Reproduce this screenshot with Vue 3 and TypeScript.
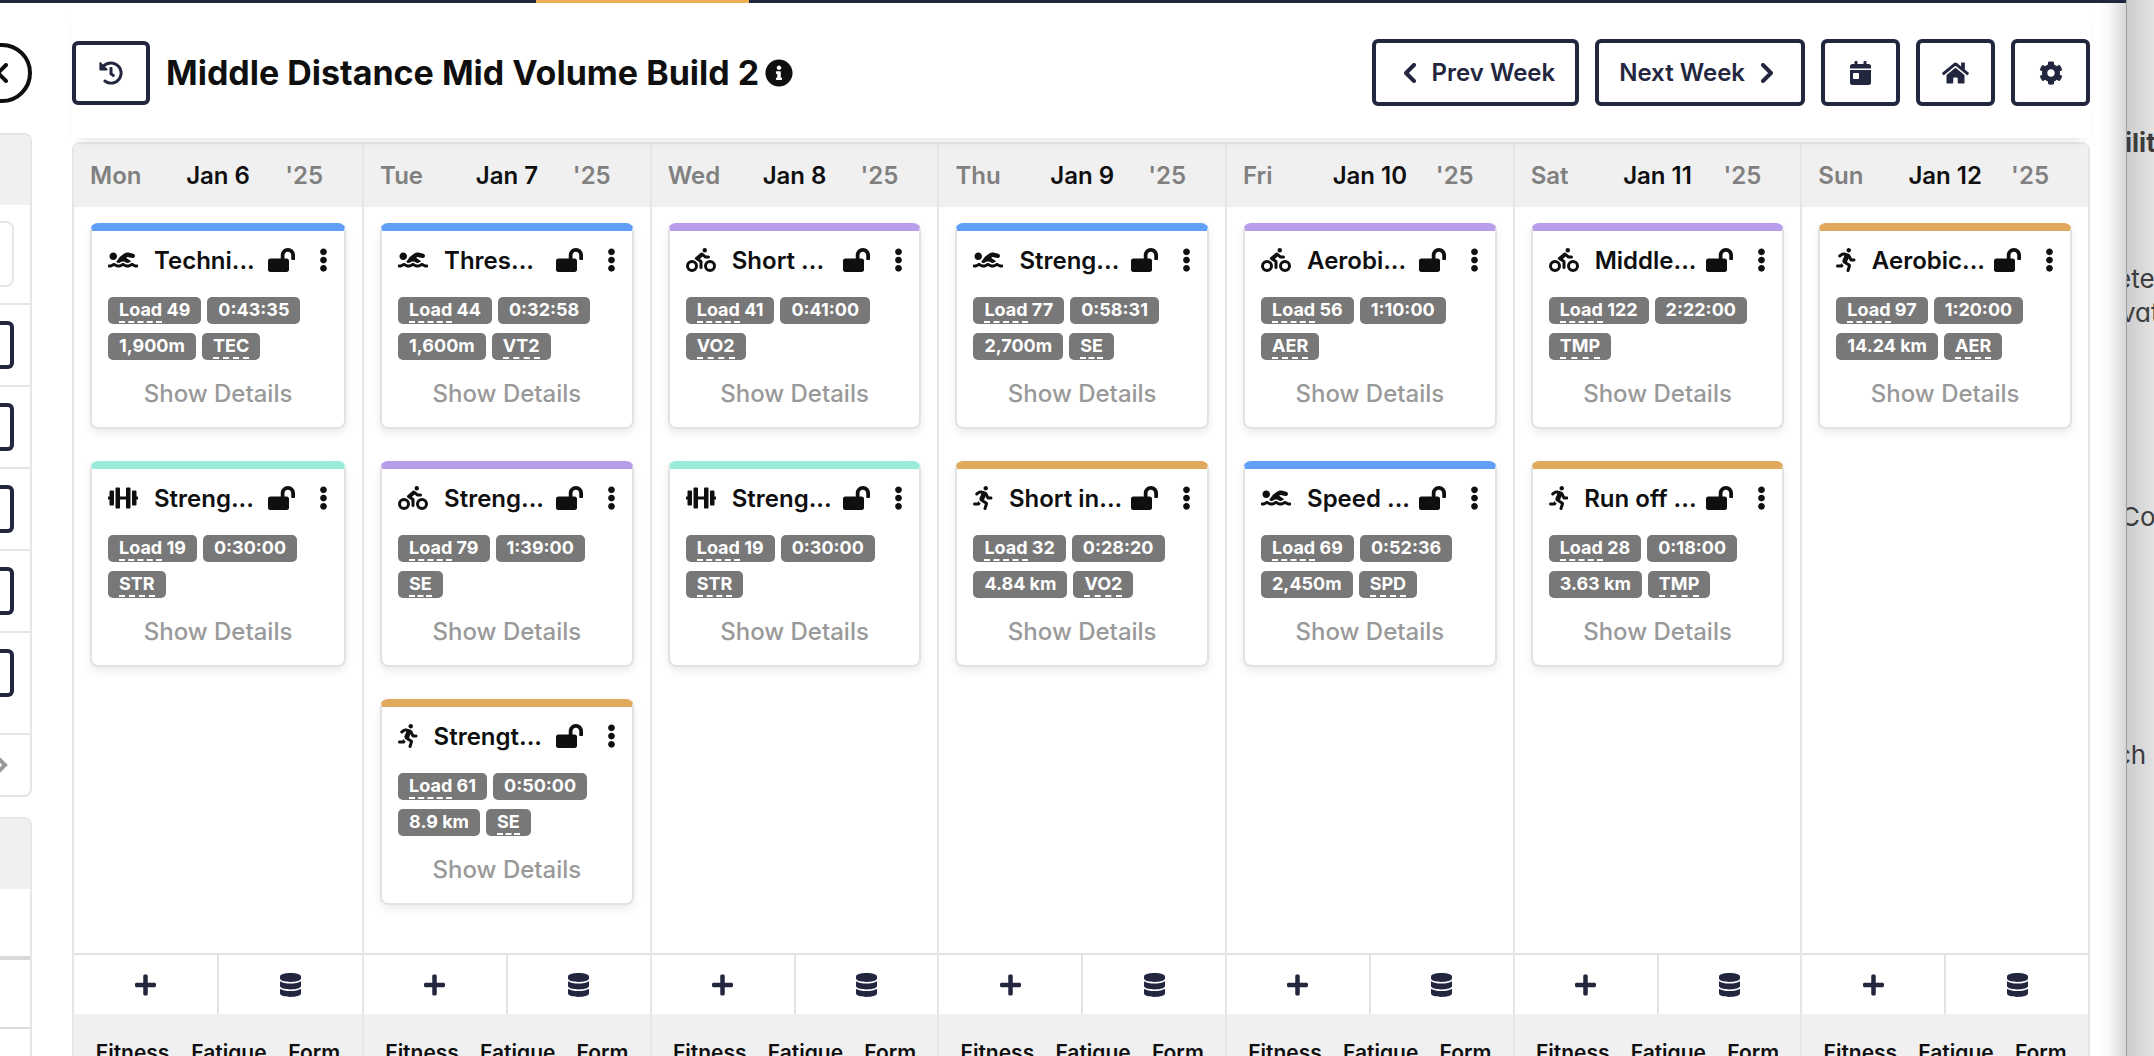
<script setup lang="ts">
type IconName =
  | 'swim' | 'bike' | 'run' | 'lift' | 'unlock' | 'menu' | 'history' | 'info'
  | 'calendar' | 'home' | 'gear' | 'database' | 'plus'

interface Glyph { w: number; d: string }

const glyphs: Record<IconName, Glyph> = {
  swim: { w: 640, d: 'M189.61 310.58c3.54 3.26 15.27 9.42 34.39 9.42s30.86-6.16 34.39-9.42c16.02-14.77 34.5-22.58 53.46-22.58h16.3c18.96 0 37.45 7.81 53.46 22.58 3.54 3.26 15.27 9.42 34.39 9.42s30.86-6.16 34.39-9.42c14.86-13.71 31.88-21.12 49.39-22.16l-112.84-80.6 18-12.86c3.64-2.58 8.28-3.52 12.62-2.61l100.35 21.53c25.91 5.53 51.44-10.97 57-36.88 5.55-25.92-10.95-51.44-36.88-57L437.68 98.47c-30.73-6.58-63.02.12-88.56 18.38l-80.02 57.17c-10.38 7.39-19.36 16.44-26.72 26.94L173.75 299c5.47 3.23 10.82 6.93 15.86 11.58zM624 352h-16c-26.04 0-45.8-8.42-56.09-17.9-8.9-8.21-19.66-14.1-31.77-14.1h-16.3c-12.11 0-22.87 5.89-31.77 14.1C461.8 343.58 442.04 352 416 352s-45.8-8.42-56.09-17.9c-8.9-8.21-19.66-14.1-31.77-14.1h-16.3c-12.11 0-22.87 5.89-31.77 14.1C269.8 343.58 250.04 352 224 352s-45.8-8.42-56.09-17.9c-8.9-8.21-19.66-14.1-31.77-14.1h-16.3c-12.11 0-22.87 5.89-31.77 14.1C77.8 343.58 58.04 352 32 352H16c-8.84 0-16 7.16-16 16v32c0 8.84 7.16 16 16 16h16c38.62 0 72.72-12.19 96-31.84 23.28 19.66 57.38 31.84 96 31.84s72.72-12.19 96-31.84c23.28 19.66 57.38 31.84 96 31.84s72.72-12.19 96-31.84c23.28 19.66 57.38 31.84 96 31.84h16c8.84 0 16-7.16 16-16v-32c0-8.84-7.16-16-16-16zm-512-96c44.18 0 80-35.82 80-80s-35.82-80-80-80-80 35.82-80 80 35.82 80 80 80z' },
  bike: { w: 640, d: 'M400 96a48 48 0 1 0-48-48 48 48 0 0 0 48 48zm-4 121a31.9 31.9 0 0 0 20 7h64a32 32 0 0 0 0-64h-52.78L356 103a31.94 31.94 0 0 0-40.81.68l-112 96a32 32 0 0 0 3.08 50.92L288 305.12V416a32 32 0 0 0 64 0V288a32 32 0 0 0-14.25-26.62l-41.36-27.57 58.25-49.92zm116 39a128 128 0 1 0 128 128 128 128 0 0 0-128-128zm0 192a64 64 0 1 1 64-64 64 64 0 0 1-64 64zM128 256a128 128 0 1 0 128 128 128 128 0 0 0-128-128zm0 192a64 64 0 1 1 64-64 64 64 0 0 1-64 64z' },
  run: { w: 416, d: 'M272 96c26.51 0 48-21.49 48-48S298.51 0 272 0s-48 21.49-48 48 21.49 48 48 48zM113.69 317.47l-14.8 34.52H32c-17.67 0-32 14.33-32 32s14.33 32 32 32h77.45c19.25 0 36.58-11.44 44.11-29.09l8.79-20.52-10.67-6.3c-17.32-10.23-30.06-25.37-37.99-42.61zM384 223.99h-44.03l-26.06-53.25c-12.5-25.55-35.45-44.23-61.78-50.94l-71.08-21.14c-28.3-6.8-57.77-.55-80.84 17.14l-39.67 30.41c-14.03 10.75-16.69 30.83-5.94 44.86s30.84 16.69 44.86 5.94l39.66-30.41c7.67-5.89 17.44-8 25.27-6.14l14.7 4.37-37.46 87.39c-12.62 29.48-1.31 64.01 26.3 80.31l84.98 50.17-27.47 87.73c-5.28 16.86 4.11 34.82 20.97 40.09 3.19 1 6.41 1.48 9.58 1.48 13.61 0 26.23-8.77 30.52-22.45l31.64-101.06c5.91-20.77-2.89-43.08-21.64-54.39l-61.24-36.14 31.31-78.28 20.27 41.43c8 16.34 24.92 26.89 43.11 26.89H384c17.67 0 32-14.33 32-32s-14.33-31.99-32-31.99z' },
  lift: { w: 640, d: 'M104 96H56c-13.3 0-24 10.7-24 24v104H8c-4.4 0-8 3.6-8 8v48c0 4.4 3.6 8 8 8h24v104c0 13.3 10.7 24 24 24h48c13.3 0 24-10.7 24-24V120c0-13.3-10.7-24-24-24zm528 128h-24V120c0-13.3-10.7-24-24-24h-48c-13.3 0-24 10.7-24 24v272c0 13.3 10.7 24 24 24h48c13.3 0 24-10.7 24-24V288h24c4.4 0 8-3.6 8-8v-48c0-4.4-3.6-8-8-8zM456 32h-48c-13.3 0-24 10.7-24 24v168H256V56c0-13.3-10.7-24-24-24h-48c-13.3 0-24 10.7-24 24v400c0 13.3 10.7 24 24 24h48c13.3 0 24-10.7 24-24V288h128v168c0 13.3 10.7 24 24 24h48c13.3 0 24-10.7 24-24V56c0-13.3-10.7-24-24-24z' },
  unlock: { w: 576, d: 'M423.5 0C339.5.3 272 69.5 272 153.5V224H48c-26.5 0-48 21.5-48 48v192c0 26.5 21.5 48 48 48h352c26.5 0 48-21.5 48-48V272c0-26.5-21.5-48-48-48h-48v-71.1c0-39.6 31.7-72.5 71.3-72.9 40-.4 72.7 32.1 72.7 72v80c0 13.3 10.7 24 24 24h32c13.3 0 24-10.7 24-24v-80C576 68 507.5-.3 423.5 0z' },
  menu: { w: 192, d: 'M96 184c39.8 0 72 32.2 72 72s-32.2 72-72 72-72-32.2-72-72 32.2-72 72-72zM24 80c0 39.8 32.2 72 72 72s72-32.2 72-72S135.8 8 96 8 24 40.2 24 80zm0 352c0 39.8 32.2 72 72 72s72-32.2 72-72-32.2-72-72-72-72 32.2-72 72z' },
  history: { w: 512, d: 'M504 255.531c.253 136.64-111.18 248.372-247.82 248.468-59.015.042-113.223-20.53-155.822-54.911-11.077-8.94-11.905-25.541-1.839-35.607l11.267-11.267c8.609-8.609 22.353-9.551 31.891-1.984C173.062 425.135 212.781 440 256 440c101.705 0 184-82.311 184-184 0-101.705-82.311-184-184-184-48.814 0-93.149 18.969-126.068 49.932l50.754 50.754c10.08 10.08 2.941 27.314-11.313 27.314H24c-8.837 0-16-7.163-16-16V38.627c0-14.254 17.234-21.393 27.314-11.314l49.372 49.372C129.209 34.136 189.552 8 256 8c136.81 0 247.747 110.78 248 247.531zm-180.912 78.784l9.823-12.63c8.138-10.463 6.253-25.542-4.21-33.679L288 256.349V152c0-13.255-10.745-24-24-24h-16c-13.255 0-24 10.745-24 24v135.651l65.409 50.874c10.463 8.137 25.541 6.253 33.679-4.21z' },
  info: { w: 512, d: 'M256 8C119.043 8 8 119.083 8 256c0 136.997 111.043 248 248 248s248-111.003 248-248C504 119.083 392.957 8 256 8zm0 110c23.196 0 42 18.804 42 42s-18.804 42-42 42-42-18.804-42-42 18.804-42 42-42zm56 254c0 6.627-5.373 12-12 12h-88c-6.627 0-12-5.373-12-12v-24c0-6.627 5.373-12 12-12h12v-64h-12c-6.627 0-12-5.373-12-12v-24c0-6.627 5.373-12 12-12h64c6.627 0 12 5.373 12 12v100h12c6.627 0 12 5.373 12 12v24z' },
  calendar: { w: 448, d: 'M0 464c0 26.5 21.5 48 48 48h352c26.5 0 48-21.5 48-48V192H0v272zm64-192c0-8.8 7.2-16 16-16h96c8.8 0 16 7.2 16 16v96c0 8.8-7.2 16-16 16H80c-8.8 0-16-7.2-16-16v-96zM400 64h-48V16c0-8.8-7.2-16-16-16h-32c-8.8 0-16 7.2-16 16v48H160V16c0-8.8-7.2-16-16-16h-32c-8.8 0-16 7.2-16 16v48H48C21.5 64 0 85.5 0 112v48h448v-48c0-26.5-21.5-48-48-48z' },
  home: { w: 576, d: 'M280.37 148.26L96 300.11V464a16 16 0 0 0 16 16l112.06-.29a16 16 0 0 0 15.92-16V368a16 16 0 0 1 16-16h64a16 16 0 0 1 16 16v95.64a16 16 0 0 0 16 16.05L464 480a16 16 0 0 0 16-16V300L295.67 148.26a12.19 12.19 0 0 0-15.3 0zM571.6 251.47L488 182.56V44.05a12 12 0 0 0-12-12h-56a12 12 0 0 0-12 12v72.61L318.47 43a48 48 0 0 0-61 0L4.34 251.47a12 12 0 0 0-1.6 16.9l25.5 31A12 12 0 0 0 45.15 301l235.22-193.74a12.19 12.19 0 0 1 15.3 0L530.9 301a12 12 0 0 0 16.9-1.6l25.5-31a12 12 0 0 0-1.7-16.93z' },
  gear: { w: 512, d: 'M487.4 315.7l-42.6-24.6c4.3-23.2 4.3-47 0-70.2l42.6-24.6c4.9-2.8 7.1-8.6 5.5-14-11.1-35.6-30-67.8-54.7-94.6-3.8-4.1-10-5.1-14.8-2.3L380.8 110c-17.9-15.4-38.5-27.3-60.8-35.1V25.8c0-5.6-3.9-10.5-9.4-11.7-36.7-8.2-74.3-7.8-109.2 0-5.5 1.2-9.4 6.1-9.4 11.7V75c-22.2 7.9-42.8 19.8-60.8 35.1L88.7 85.5c-4.9-2.8-11-1.9-14.8 2.3-24.7 26.7-43.6 58.9-54.7 94.6-1.7 5.4.6 11.2 5.5 14L67.3 221c-4.3 23.2-4.3 47 0 70.2l-42.6 24.6c-4.9 2.8-7.1 8.6-5.5 14 11.1 35.6 30 67.8 54.7 94.6 3.8 4.1 10 5.1 14.8 2.3l42.6-24.6c17.9 15.4 38.5 27.3 60.8 35.1v49.2c0 5.6 3.9 10.5 9.4 11.7 36.7 8.2 74.3 7.8 109.2 0 5.5-1.2 9.4-6.1 9.4-11.7v-49.2c22.2-7.9 42.8-19.8 60.8-35.1l42.6 24.6c4.9 2.8 11 1.9 14.8-2.3 24.7-26.7 43.6-58.9 54.7-94.6 1.5-5.5-.7-11.3-5.6-14.1zM256 336c-44.1 0-80-35.9-80-80s35.9-80 80-80 80 35.9 80 80-35.9 80-80 80z' },
  database: { w: 448, d: 'M448 73.143v45.714C448 159.143 347.667 192 224 192S0 159.143 0 118.857V73.143C0 32.857 100.333 0 224 0s224 32.857 224 73.143zM448 176v102.857C448 319.143 347.667 352 224 352S0 319.143 0 278.857V176c48.125 33.143 136.208 48.572 224 48.572S399.874 209.143 448 176zm0 160v102.857C448 479.143 347.667 512 224 512S0 479.143 0 438.857V336c48.125 33.143 136.208 48.572 224 48.572S399.874 369.143 448 336z' },
  plus: { w: 448, d: 'M416 208H272V64c0-17.67-14.33-32-32-32h-32c-17.67 0-32 14.33-32 32v144H32c-17.67 0-32 14.33-32 32v32c0 17.67 14.33 32 32 32h144v144c0 17.67 14.33 32 32 32h32c17.67 0 32-14.33 32-32V304h144c17.67 0 32-14.33 32-32v-32c0-17.67-14.33-32-32-32z' },
}

type Sport = 'swim' | 'bike' | 'run' | 'lift'

interface Workout {
  sport: Sport
  title: string
  load: number
  time: string
  distance?: string
  zone: string
}

interface Day { name: string; date: string; workouts: Workout[] }

const w = (sport: Sport, title: string, load: number, time: string, zone: string, distance?: string): Workout =>
  ({ sport, title, load, time, zone, distance })

const days: Day[] = [
  { name: 'Mon', date: 'Jan 6', workouts: [
    w('swim', 'Techni...', 49, '0:43:35', 'TEC', '1,900m'),
    w('lift', 'Streng...', 19, '0:30:00', 'STR'),
  ] },
  { name: 'Tue', date: 'Jan 7', workouts: [
    w('swim', 'Thres...', 44, '0:32:58', 'VT2', '1,600m'),
    w('bike', 'Streng...', 79, '1:39:00', 'SE'),
    w('run', 'Strengt...', 61, '0:50:00', 'SE', '8.9 km'),
  ] },
  { name: 'Wed', date: 'Jan 8', workouts: [
    w('bike', 'Short ...', 41, '0:41:00', 'VO2'),
    w('lift', 'Streng...', 19, '0:30:00', 'STR'),
  ] },
  { name: 'Thu', date: 'Jan 9', workouts: [
    w('swim', 'Streng...', 77, '0:58:31', 'SE', '2,700m'),
    w('run', 'Short in...', 32, '0:28:20', 'VO2', '4.84 km'),
  ] },
  { name: 'Fri', date: 'Jan 10', workouts: [
    w('bike', 'Aerobi...', 56, '1:10:00', 'AER'),
    w('swim', 'Speed ...', 69, '0:52:36', 'SPD', '2,450m'),
  ] },
  { name: 'Sat', date: 'Jan 11', workouts: [
    w('bike', 'Middle...', 122, '2:22:00', 'TMP'),
    w('run', 'Run off ...', 28, '0:18:00', 'TMP', '3.63 km'),
  ] },
  { name: 'Sun', date: 'Jan 12', workouts: [
    w('run', 'Aerobic...', 97, '1:20:00', 'AER', '14.24 km'),
  ] },
]

const tools: { icon: IconName; label: string }[] = [
  { icon: 'calendar', label: 'Today' },
  { icon: 'home', label: 'Home' },
  { icon: 'gear', label: 'Settings' },
]

const box = (name: IconName): string => `0 0 ${glyphs[name].w} 512`
</script>

<template>
  <div class="screen">
    <div class="window">
      <div class="topbar"><span class="topbar-active"></span></div>
      <div class="page">
        <aside class="side">
          <button class="collapse" type="button" aria-label="Collapse panel">
            <svg viewBox="0 0 12 20" class="chevron"><path d="M10 2 2 10l8 8" /></svg>
          </button>
          <section class="panel">
            <div class="panel-head"></div>
            <div class="panel-row search"><input type="text" aria-label="Search" /></div>
            <div v-for="n in 4" :key="n" class="panel-row"><button type="button" class="stub" aria-label="Open"></button></div>
            <div class="panel-row tall"><button type="button" class="stub" aria-label="Open"></button></div>
            <div class="panel-foot">
              <svg viewBox="0 0 12 20" class="more"><path d="m2 3 7 7-7 7" /></svg>
            </div>
          </section>
          <section class="panel second">
            <div class="panel-head"></div>
            <div class="cell first"></div>
            <div class="cell"></div>
            <div class="cell"></div>
          </section>
        </aside>

        <main class="main">
          <header class="toolbar">
            <button class="btn icon-btn past" type="button" aria-label="History">
              <svg class="ico" :viewBox="box('history')"><path :d="glyphs.history.d" /></svg>
            </button>
            <h1>Middle Distance Mid Volume Build 2</h1>
            <svg class="info" :viewBox="box('info')"><path :d="glyphs.info.d" /></svg>
            <div class="actions">
              <button class="btn" type="button">
                <svg viewBox="0 0 12 20" class="chevron"><path d="M10 2 2 10l8 8" /></svg>
                <span>Prev Week</span>
              </button>
              <button class="btn" type="button">
                <span>Next Week</span>
                <svg viewBox="0 0 12 20" class="chevron"><path d="m2 2 8 8-8 8" /></svg>
              </button>
              <button v-for="t in tools" :key="t.icon" class="btn icon-btn" type="button" :aria-label="t.label">
                <svg class="ico" :viewBox="box(t.icon)"><path :d="glyphs[t.icon].d" /></svg>
              </button>
            </div>
          </header>

          <div class="board">
            <section v-for="day in days" :key="day.name" class="day">
              <div class="day-head">
                <span class="dim">{{ day.name }}</span>
                <span class="date">{{ day.date }}</span>
                <span class="dim year">'25</span>
              </div>
              <div class="day-body">
                <article v-for="(item, i) in day.workouts" :key="i" class="card" :class="item.sport">
                  <div class="card-head">
                    <svg class="ico" :viewBox="box(item.sport)"><path :d="glyphs[item.sport].d" /></svg>
                    <h2>{{ item.title }}</h2>
                    <button type="button" class="bare" aria-label="Unlocked">
                      <svg class="ico" :viewBox="box('unlock')"><path :d="glyphs.unlock.d" /></svg>
                    </button>
                    <button type="button" class="bare" aria-label="Menu">
                      <svg class="ico" :viewBox="box('menu')"><path :d="glyphs.menu.d" /></svg>
                    </button>
                  </div>
                  <div class="tags">
                    <div class="tag-row">
                      <span class="tag"><abbr>Load</abbr> {{ item.load }}</span>
                      <span class="tag">{{ item.time }}</span>
                    </div>
                    <div class="tag-row">
                      <span v-if="item.distance" class="tag">{{ item.distance }}</span>
                      <span class="tag"><abbr>{{ item.zone }}</abbr></span>
                    </div>
                  </div>
                  <button type="button" class="details">Show Details</button>
                </article>
              </div>
              <div class="day-actions">
                <button type="button" aria-label="Add workout">
                  <svg class="ico" :viewBox="box('plus')"><path :d="glyphs.plus.d" /></svg>
                </button>
                <button type="button" aria-label="Workout library">
                  <svg class="ico" :viewBox="box('database')"><path :d="glyphs.database.d" /></svg>
                </button>
              </div>
              <div class="stats"><span>Fitness</span><span>Fatigue</span><span>Form</span></div>
            </section>
          </div>
        </main>
      </div>
    </div>

    <aside class="behind">
      <strong>ilit</strong>
      <p class="pair"><span class="tucked">ete</span><span>vat</span></p>
      <p class="line">Coa</p>
      <p class="line tucked">ch</p>
    </aside>
  </div>
</template>

<style>
body {
  margin: 0;
  overflow: hidden;
}
</style>

<style scoped>
.screen {
  --ink: #0f0f10;
  --navy: #23263f;
  --line: #e6e6e6;
  --soft: #f0f0f0;
  display: flex;
  height: 100vh;
  overflow: hidden;
  font-family: Inter, "Liberation Sans", sans-serif;
  font-size: 24px;
  color: var(--ink);
  background: #fff;
}
.screen * { box-sizing: border-box; }
h1, h2, p { margin: 0; }
button { font: inherit; color: inherit; background: none; border: 0; padding: 0; }
svg { display: block; flex: none; fill: currentColor; }
.ico { height: 24px; }

.window { position: relative; flex: 1; min-width: 0; }
.window::after {
  content: "";
  position: absolute;
  top: 3px;
  right: 0;
  bottom: 0;
  width: 28px;
  background: linear-gradient(to right, rgba(0, 0, 0, 0), rgba(0, 0, 0, 0.03) 40%, rgba(0, 0, 0, 0.16));
}
.topbar { height: 3px; background: var(--navy); display: flex; padding-left: 536px; }
.topbar-active { width: 213px; background: #f0ae54; }
.page { display: flex; }

.side { flex: none; width: 32px; padding-top: 40px; }
.collapse {
  display: flex;
  align-items: center;
  justify-content: center;
  width: 60px;
  height: 60px;
  margin-left: -28px;
  border: 4px solid var(--ink);
  border-radius: 50%;
}
.chevron { width: 12px; height: 20px; fill: none; stroke: currentColor; stroke-width: 4; stroke-linecap: round; stroke-linejoin: round; }
.panel { margin-top: 30px; border: 2px solid var(--line); border-left: 0; border-radius: 0 8px 8px 0; overflow: hidden; }
.panel.second { margin-top: 20px; }
.panel-head { height: 70px; background: var(--soft); }
.panel-row { height: 82px; padding: 16px 16px 0 0; border-bottom: 2px solid var(--line); }
.search { height: 100px; }
.tall { height: 102px; }
.search input { display: block; width: 100%; height: 66px; padding: 0; border: 2px solid var(--line); border-left: 0; border-radius: 0 8px 8px 0; background: #fff; }
.stub { display: block; width: 100%; height: 48px; border: 4px solid var(--navy); border-left: 0; border-radius: 0 6px 6px 0; }
.panel-foot { height: 60px; display: flex; align-items: center; color: #999; }
.more { width: 12px; height: 20px; margin-left: -4px; fill: none; stroke: currentColor; stroke-width: 4; }
.cell { height: 69px; border-top: 2px solid #d9d9d9; }
.cell.first { border-top: 0; border-bottom: 2px solid #d9d9d9; }

.main { flex: 1; min-width: 0; margin: 0 36px 0 40px; }
.toolbar {
  position: relative;
  display: flex;
  align-items: center;
  height: 135px;
  margin-bottom: 4px;
  padding-top: 4px;
  background: #fff;
  box-shadow: 0 8px 12px -8px rgba(0, 0, 0, 0.16);
}
h1 { margin: 0 6px 0 16px; font-size: 34px; line-height: 42px; font-weight: 700; white-space: nowrap; }
.info { width: 28px; height: 28px; }
.actions { display: flex; gap: 16px; margin-left: auto; color: var(--navy); }
.btn {
  display: flex;
  align-items: center;
  justify-content: center;
  gap: 16px;
  height: 67px;
  padding: 0 20px;
  border: 4px solid var(--navy);
  border-radius: 6px;
  color: var(--navy);
  font-weight: 600;
  white-space: nowrap;
}
.btn .chevron:first-child { margin-left: 8px; }
.btn .chevron:last-child { margin-right: 8px; }
.btn.icon-btn { width: 79px; padding: 0; }
.btn.past { width: 78px; height: 64px; }

.board {
  display: grid;
  grid-template-columns: minmax(0, 66fr) repeat(6, minmax(0, 65fr));
  border-top: 2px solid var(--line);
  border-radius: 8px 8px 0 0;
}
.day { border-right: 2px solid var(--line); }
.day:first-child { border-left: 2px solid var(--line); }
.day:first-child, .day:first-child .day-head { border-top-left-radius: 6px; }
.day:last-child, .day:last-child .day-head { border-top-right-radius: 6px; }
.day-head {
  display: grid;
  grid-template-columns: 1fr auto 1fr;
  align-items: center;
  height: 63px;
  padding: 0 16px;
  background: var(--soft);
  font-weight: 600;
}
.dim { color: #808080; }
.year { justify-self: end; padding-right: 23px; }
.day-body { height: 746px; padding: 16px; display: flex; flex-direction: column; gap: 32px; }
.card {
  --sport: #629ff8;
  height: 206px;
  border: 2px solid #e2e2e2;
  border-top: 8px solid var(--sport);
  border-radius: 8px;
  padding: 0 16px;
  box-shadow: 0 4px 8px rgba(0, 0, 0, 0.08);
}
.bike { --sport: #b89eea; }
.run { --sport: #e1a95e; }
.lift { --sport: #99ecd9; }
.card-head { display: flex; align-items: center; height: 58px; }
h2 { flex: 1; min-width: 0; margin: 0 8px 0 16px; font-size: 24px; font-weight: 600; white-space: nowrap; overflow: hidden; }
.bare { display: flex; }
.bare + .bare { margin-left: 24px; }
.tags { display: flex; flex-direction: column; gap: 9px; padding-top: 8px; }
.tag-row { display: flex; gap: 6px; }
.tag { height: 27px; padding: 0 11px; border-radius: 5px; background: #787878; color: #fff; font-size: 18px; line-height: 25px; font-weight: 700; white-space: nowrap; }
.tag abbr { display: inline-block; line-height: 23px; border-bottom: 2px dashed #fff; }
.details { display: block; width: 100%; height: 66px; color: #999; font-weight: 500; }
.day-actions { display: flex; height: 61px; border-top: 2px solid #e2e2e2; color: var(--navy); }
.day-actions button { flex: 1; display: flex; align-items: center; justify-content: center; }
.day-actions button + button { border-left: 2px solid #e2e2e2; }
.stats { display: flex; justify-content: space-evenly; height: 120px; padding-top: 24px; background: var(--soft); font-size: 21px; line-height: 30px; font-weight: 600; }

.behind {
  flex: none;
  width: 28px;
  overflow: hidden;
  padding-top: 126px;
  border-left: 1px solid #a0a0a0;
  background: linear-gradient(to right, #cdcdcd, #e2e2e2);
  color: #3c3c3e;
  font-size: 26px;
  line-height: 34px;
  font-feature-settings: "cv11";
  white-space: nowrap;
}
.behind strong { display: block; margin-left: -2px; }
.behind span { display: block; margin-left: -6px; }
.pair { margin-top: 102px; }
.line { margin: 170px 0 0 -6px; }
.line + .line { margin-top: 204px; }
.behind .tucked { margin-left: -11px; }
</style>
